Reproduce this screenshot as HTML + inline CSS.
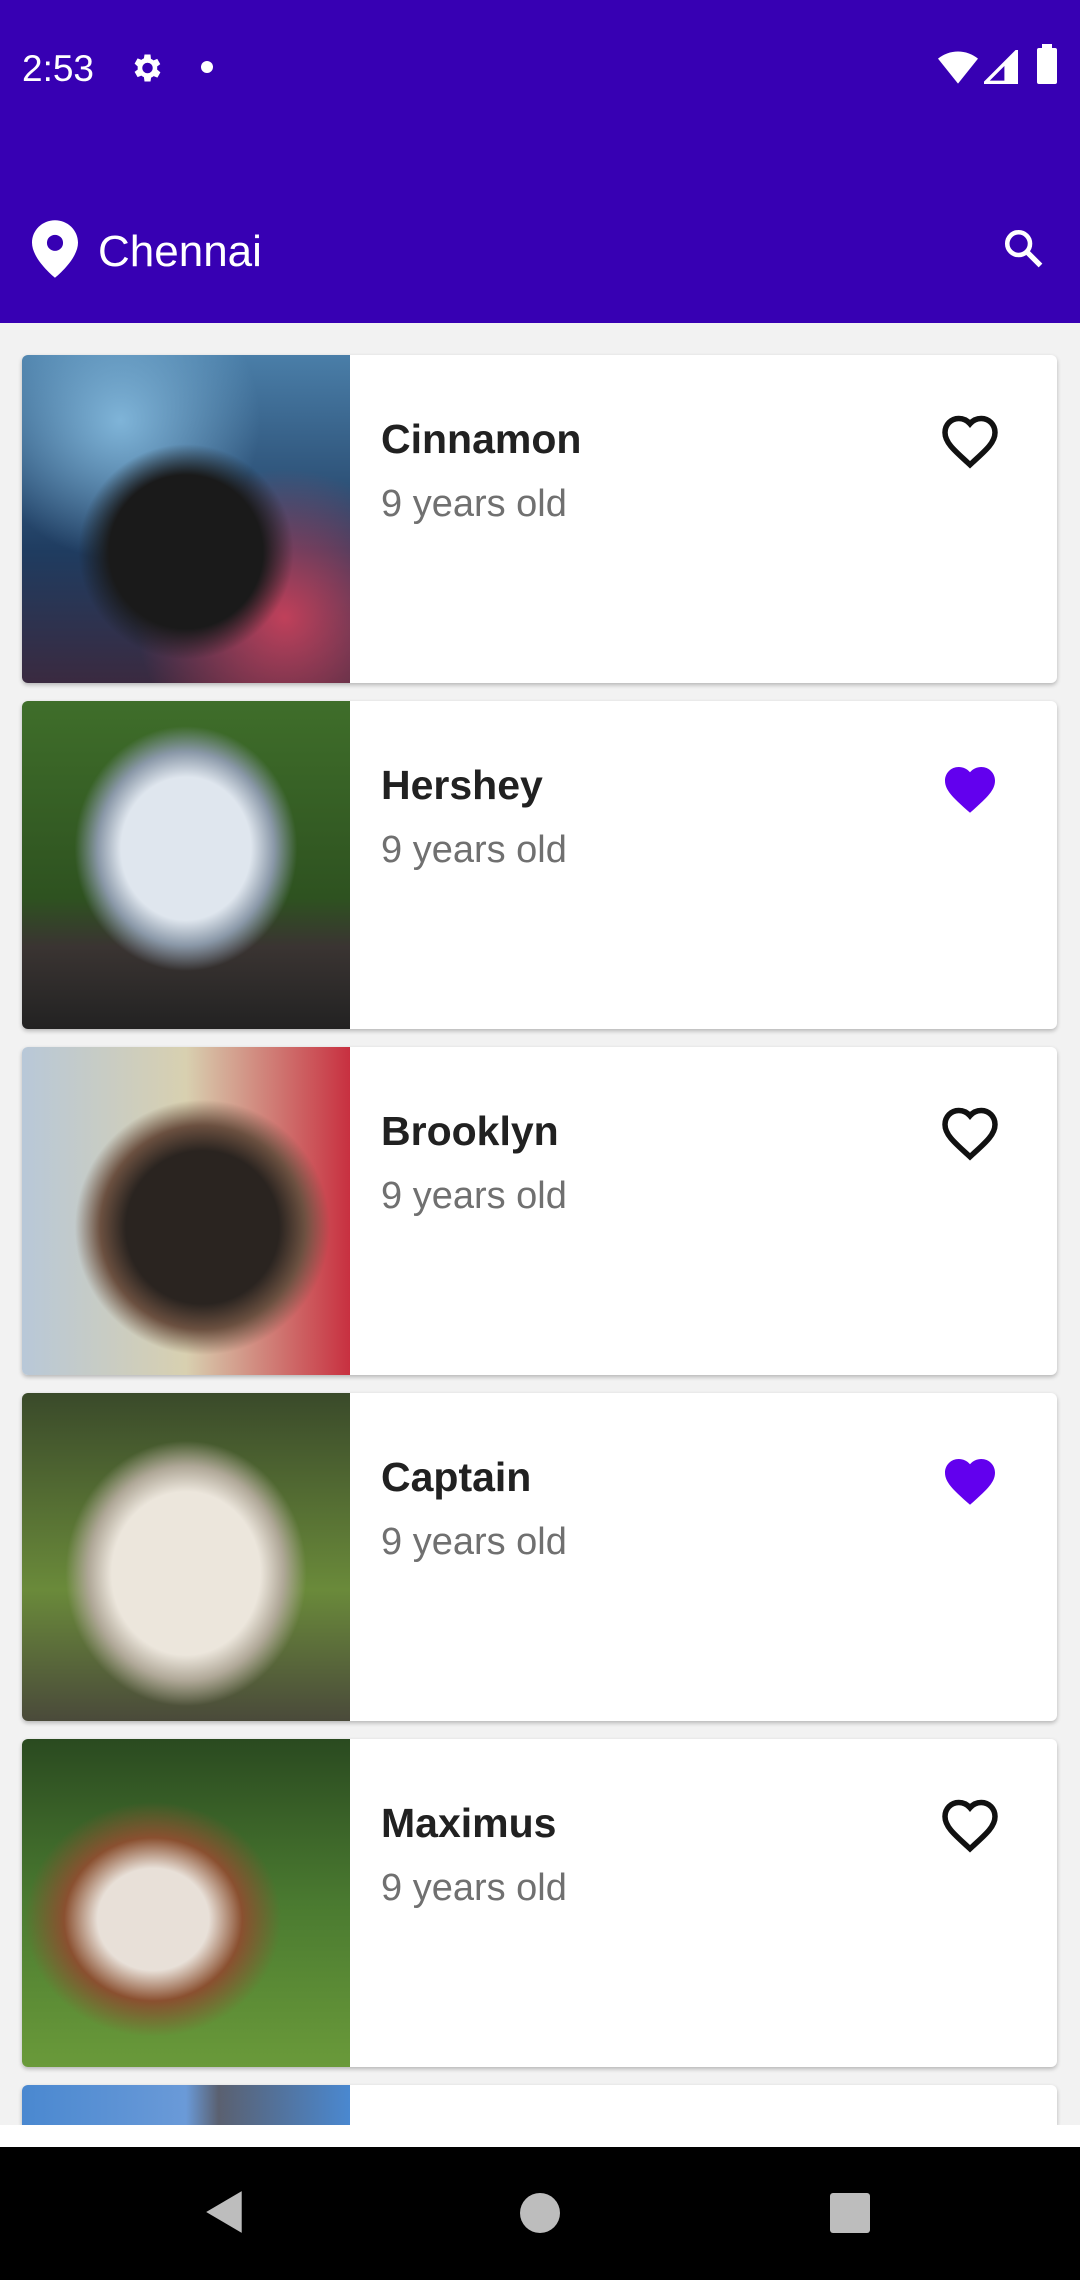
<!DOCTYPE html>
<html><head><meta charset="utf-8"><style>
*{margin:0;padding:0;box-sizing:border-box}
body{width:1080px;height:2280px;background:#f2f2f2;font-family:"Liberation Sans",Roboto,sans-serif;position:relative;overflow:hidden}
.top{position:absolute;left:0;top:0;width:1080px;height:323px;background:#3700b3}
.st{position:absolute;top:48px;left:22px;color:#fff;font-size:37px}
.loc{position:absolute;left:98px;top:227px;color:#fff;font-size:44px}
.card{position:absolute;left:22px;width:1035px;height:328px;background:#fff;border-radius:6px;overflow:hidden;box-shadow:0 2px 4px rgba(0,0,0,.25)}
.img{position:absolute;left:0;top:0;width:328px;height:328px}
.nm{position:absolute;left:359px;top:61px;font-size:41px;font-weight:bold;color:#212121}
.ag{position:absolute;left:359px;top:128px;font-size:38px;color:#707070}
.hr{position:absolute;left:918px;top:58px;width:60px;height:56px}
.nav{position:absolute;left:0;top:2147px;width:1080px;height:133px;background:#000}
</style></head><body>
<div class="top">
<div class="st">2:53</div>
<svg style="position:absolute;left:128px;top:50px" width="36" height="36" viewBox="0 0 24 24"><path fill="#fff" d="M19.4 13c.04-.3.06-.6.06-1s-.02-.7-.06-1l2.1-1.6-2-3.5-2.5 1a7 7 0 0 0-1.7-1L15 3h-4l-.4 2.6a7 7 0 0 0-1.7 1l-2.5-1-2 3.5L6.5 11c-.04.3-.06.6-.06 1s.02.7.06 1l-2.1 1.6 2 3.5 2.5-1a7 7 0 0 0 1.7 1L11 21h4l.4-2.6a7 7 0 0 0 1.7-1l2.5 1 2-3.5zM13 15.5A3.5 3.5 0 1 1 13 8.5a3.5 3.5 0 0 1 0 7z"/></svg>
<div style="position:absolute;left:201px;top:61px;width:12px;height:12px;border-radius:50%;background:#fff"></div>
<svg style="position:absolute;left:938px;top:50px" width="40" height="34" viewBox="0 0 24 20"><path fill="#fff" d="M12 20L0 5a19 19 0 0 1 24 0z"/></svg>
<svg style="position:absolute;left:984px;top:50px" width="34" height="34" viewBox="0 0 20 20"><path fill="none" stroke="#fff" stroke-width="2" d="M1 19L19 1v18z"/><path fill="#fff" d="M12 19V8l7-7v18z"/></svg>
<div style="position:absolute;left:1037px;top:48px;width:20px;height:36px;background:#fff;border-radius:2px"></div>
<div style="position:absolute;left:1042px;top:44px;width:10px;height:5px;background:#fff"></div>
<svg style="position:absolute;left:32px;top:220px" width="46" height="58" viewBox="0 0 24 30"><path fill="#fff" d="M12 0C5.4 0 0 5.2 0 11.7 0 20.5 12 30 12 30s12-9.5 12-18.3C24 5.2 18.6 0 12 0zm0 16a4.2 4.2 0 1 1 0-8.4 4.2 4.2 0 0 1 0 8.4z"/></svg>
<div class="loc">Chennai</div>
<svg style="position:absolute;left:1002px;top:227px" width="42" height="42" viewBox="0 0 24 24"><circle cx="9.5" cy="9.5" r="6.5" fill="none" stroke="#fff" stroke-width="2.6"/><path d="M14.5 14.5L22 22" stroke="#fff" stroke-width="3"/></svg>
</div>

<div class="card" style="top:355px"><div class="img" style="background:radial-gradient(circle at 50% 60%,#1a1a1a 0 30%,transparent 42%),radial-gradient(circle at 30% 20%,#7fb4d8,transparent 40%),radial-gradient(circle at 80% 80%,#c0405a,transparent 40%),linear-gradient(#4a7ea8,#1f3c60 60%,#3a2a40)"></div><div class="nm">Cinnamon</div><div class="ag">9 years old</div>
<svg class="hr" viewBox="0 0 24 22"><path fill="none" stroke="#111" stroke-width="2.2" d="M12 20.5l-1.3-1.2C5.5 14.6 2 11.5 2 7.6 2 4.5 4.4 2 7.5 2c1.7 0 3.4.8 4.5 2.1C13.1 2.8 14.8 2 16.5 2 19.6 2 22 4.5 22 7.6c0 3.9-3.5 7-8.7 11.7z"/></svg></div>

<div class="card" style="top:701px"><div class="img" style="background:radial-gradient(ellipse at 50% 45%,#dfe6ee 0 28%,#8a98a8 38%,transparent 48%),linear-gradient(#3f6e2a,#2e5220 60%,#3a3432 75%,#222)"></div><div class="nm">Hershey</div><div class="ag">9 years old</div>
<svg class="hr" viewBox="0 0 24 22"><path fill="#6200ee" d="M12 21.3l-1.5-1.3C5.3 15.3 2 12.3 2 8.5 2 5.4 4.4 3 7.5 3c1.7 0 3.4.8 4.5 2.1C13.1 3.8 14.8 3 16.5 3 19.6 3 22 5.4 22 8.5c0 3.8-3.3 6.8-8.5 11.5z"/></svg></div>

<div class="card" style="top:1047px"><div class="img" style="background:radial-gradient(ellipse at 55% 55%,#2a2420 0 30%,#6b5040 40%,transparent 50%),linear-gradient(90deg,#b8c8d8,#d8d0b0 50%,#c83040)"></div><div class="nm">Brooklyn</div><div class="ag">9 years old</div>
<svg class="hr" viewBox="0 0 24 22"><path fill="none" stroke="#111" stroke-width="2.2" d="M12 20.5l-1.3-1.2C5.5 14.6 2 11.5 2 7.6 2 4.5 4.4 2 7.5 2c1.7 0 3.4.8 4.5 2.1C13.1 2.8 14.8 2 16.5 2 19.6 2 22 4.5 22 7.6c0 3.9-3.5 7-8.7 11.7z"/></svg></div>

<div class="card" style="top:1393px"><div class="img" style="background:radial-gradient(ellipse at 50% 55%,#ece6dc 0 32%,#b0a898 42%,transparent 52%),linear-gradient(#3a4a2a,#6a8a3a 60%,#4a4a3a)"></div><div class="nm">Captain</div><div class="ag">9 years old</div>
<svg class="hr" viewBox="0 0 24 22"><path fill="#6200ee" d="M12 21.3l-1.5-1.3C5.3 15.3 2 12.3 2 8.5 2 5.4 4.4 3 7.5 3c1.7 0 3.4.8 4.5 2.1C13.1 3.8 14.8 3 16.5 3 19.6 3 22 5.4 22 8.5c0 3.8-3.3 6.8-8.5 11.5z"/></svg></div>

<div class="card" style="top:1739px"><div class="img" style="background:radial-gradient(ellipse at 40% 55%,#e8e0d8 0 20%,#8a5030 32%,transparent 46%),linear-gradient(#2a4a20,#4a7a30 50%,#6a9a3a)"></div><div class="nm">Maximus</div><div class="ag">9 years old</div>
<svg class="hr" viewBox="0 0 24 22"><path fill="none" stroke="#111" stroke-width="2.2" d="M12 20.5l-1.3-1.2C5.5 14.6 2 11.5 2 7.6 2 4.5 4.4 2 7.5 2c1.7 0 3.4.8 4.5 2.1C13.1 2.8 14.8 2 16.5 2 19.6 2 22 4.5 22 7.6c0 3.9-3.5 7-8.7 11.7z"/></svg></div>

<div class="card" style="top:2085px;height:40px;border-radius:6px 6px 0 0"><div class="img" style="height:40px;background:linear-gradient(90deg,#4a88d0,#6a9ad8 50%,#5a6070 60%,#4a88d0)"></div></div>
<div style="position:absolute;left:0;top:2125px;width:1080px;height:22px;background:#fff"></div>

<div class="nav">
<svg style="position:absolute;left:204px;top:42px" width="42" height="46" viewBox="0 0 20 22"><path fill="#bdbdbd" d="M18 1v20L1 11z"/></svg>
<div style="position:absolute;left:520px;top:46px;width:40px;height:40px;border-radius:50%;background:#bdbdbd"></div>
<div style="position:absolute;left:830px;top:46px;width:40px;height:40px;border-radius:3px;background:#bdbdbd"></div>
</div>
</body></html>
